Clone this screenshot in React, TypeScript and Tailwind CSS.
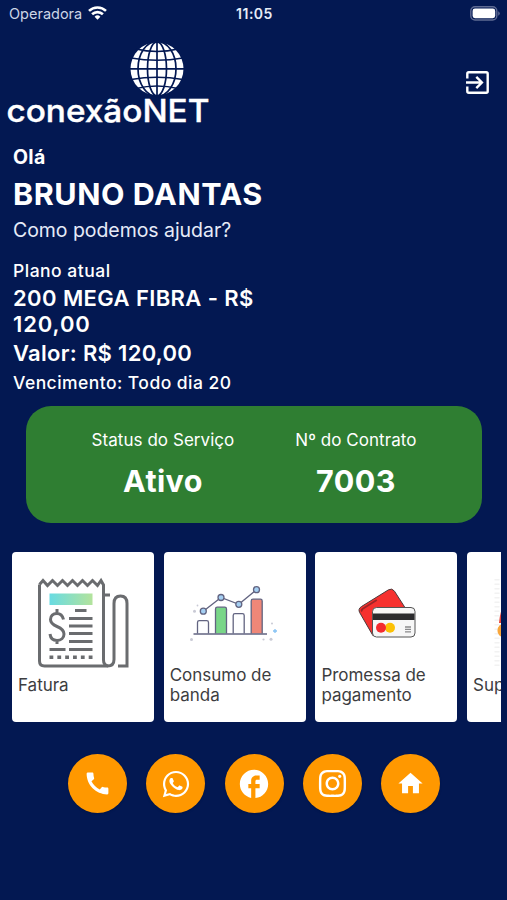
import type { ReactNode } from 'react';
import { MdCall, MdFacebook, MdHome } from 'react-icons/md';
import { FaInstagram, FaWhatsapp } from 'react-icons/fa';

function StatusBar() {
  return (
    <div className="grid h-7 shrink-0 grid-cols-3 items-center pl-[9px] pr-[7px]">
      <div className="flex items-center gap-[6px] text-[14.5px] leading-5 text-[#cdd5e6]">
        <span>Operadora</span>
        <svg className="h-[14px] w-[19px] -translate-y-px" viewBox="0 0 19 14" fill="none" stroke="#fff" strokeWidth="2.6">
          <path d="M1 4.9a12.2 12.2 0 0 1 17 0" />
          <path d="M4.1 8.3a7.8 7.8 0 0 1 10.8 0" />
          <path d="M9.5 13.7 6.6 10.8a4.1 4.1 0 0 1 5.8 0Z" fill="#fff" stroke="none" />
        </svg>
      </div>
      <span className="-translate-y-px text-center text-[14px] font-semibold tracking-[0.5px] text-[#e6ecf7]">11:05</span>
      <svg className="h-[15px] w-[30px] -translate-y-px justify-self-end" viewBox="0 0 30 15">
        <rect x="0.8" y="0.8" width="26" height="13.2" rx="4.2" fill="none" stroke="#5f6b93" strokeWidth="1.4" />
        <rect x="2.6" y="2.6" width="22.6" height="9.6" rx="2.4" fill="#fff" />
        <path d="M28.2 5.2q1.6.8 1.6 2.3t-1.6 2.3Z" fill="#5f6b93" />
      </svg>
    </div>
  );
}

function Logo() {
  return (
    <svg className="h-[88px] w-[206px]" viewBox="0 0 206 88" role="img" aria-label="conexãoNET">
      <circle cx="151" cy="28.8" r="26.5" fill="#fff" />
      <g fill="none" stroke="#031852" strokeWidth="1.7">
        <path d="M151 2v54M124 28.800h54" />
        <ellipse cx="151" cy="28.800" rx="9.500" ry="27" />
        <ellipse cx="151" cy="28.800" rx="19" ry="27.500" />
        <path d="M125 18q26 4.500 52 0M130 9q21 5 42 0M125 39.500q26-4.500 52 0M130 48.500q21-5 42 0" />
      </g>
      <text
        x="0.5"
        y="81.5"
        fill="#fff"
        stroke="#fff"
        strokeWidth="0.4"
        fontSize="31.5"
        fontWeight="500"
        textLength="203"
        lengthAdjust="spacingAndGlyphs"
      >
        conexãoNET
      </text>
    </svg>
  );
}

function ExitIcon() {
  return (
    <svg className="h-[23px] w-[23px]" viewBox="0 0 23 23" fill="none" stroke="#fff" strokeWidth="2.4">
      <path d="M1.3 7.5V2.8q0-1.5 1.5-1.5h17.4q1.5 0 1.5 1.5v17.4q0 1.5-1.5 1.5H2.8q-1.5 0-1.5-1.5v-4.7" />
      <path d="M0 11.5h15.500M10.300 5.900l5.600 5.600-5.600 5.600" />
    </svg>
  );
}

function InvoiceIcon() {
  return (
    <svg className="h-[92px] w-[92px] translate-y-[9px]" viewBox="0 0 92 92" fill="none" stroke="#6a6c6f" strokeWidth="3">
      <defs>
        <linearGradient id="band" x1="0" x2="1" y1="0" y2="0">
          <stop offset="0" stopColor="#68dbe2" />
          <stop offset="1" stopColor="#b3e39c" />
        </linearGradient>
      </defs>
      <path d="M2.500 7.500V84q0 5 5 5h63q6.500 0 6.500-6.500V26.500q0-7.500 6.500-7.500t6.500 7.500V89H81" />
      <path d="M2.500 7.500 6 3.500l4.500 5 5-5 5 5 5-5 5 5 5-5 5 5 5-5 5 5 5-5 5 5 3.500-5 2.500 4.500V83q0 5 4.500 6M67 18h6" />
      <rect x="12.500" y="16.500" width="43" height="11.500" fill="url(#band)" stroke="none" />
      <path d="M26.500 42.500c-1-4-3-6-6.500-6-4 0-6.500 2.300-6.500 6 0 4 3 5.500 6.500 7s7 3.500 7 7.500-3 6.500-7 6.500-6.500-2.500-7-6.500M20 32v5M20 62.500v4.500" />
      <path d="M38 33.500H49.500M32 41.500H55.500M32 49H55.500M32 56.500H55.500M32 64.500H55.500M32 72.500H55.500M12.500 72.500H28.500" />
      <path d="M12.500 80.300h43" strokeWidth="3.400" strokeDasharray="3.800 4.040" />
    </svg>
  );
}

function UsageIcon() {
  return (
    <svg className="h-[60px] w-[90px] -translate-y-[2px]" viewBox="0 0 90 60" fill="none" stroke="#626481" strokeWidth="1.300">
      <path d="M7.500 51.500V40.500q0-1.800 1.800-1.800h7.400q1.800 0 1.800 1.800v11" fill="#fdfeff" />
      <path d="M25.500 51.500V27q0-1.800 1.800-1.800h7.400q1.800 0 1.800 1.800v24.500" fill="#79d688" />
      <path d="M43.200 51.500V33.500q0-1.800 1.800-1.800h7.400q1.800 0 1.800 1.800v18" fill="#fdfeff" />
      <path d="M61.200 51.500V19q0-1.800 1.800-1.800h7.400q1.800 0 1.800 1.800v32.500" fill="#ef8778" />
      <path d="M3.500 52h73.500M13.300 29.200 31 15.500l17.800 6.800L66.500 7.700" />
      <g fill="#a5cff2">
        <circle cx="13.300" cy="29.200" r="3" />
        <circle cx="31" cy="15.500" r="3" />
        <circle cx="48.800" cy="22.300" r="3" />
        <circle cx="66.500" cy="7.700" r="3" />
      </g>
      <g fill="#c9cad5" stroke="none">
        <circle cx="7.500" cy="23.500" r=".9" />
        <circle cx="4.500" cy="29.200" r="1.500" />
        <circle cx="1.500" cy="57.500" r="1.500" />
        <circle cx="73.500" cy="57.500" r="1.100" />
        <circle cx="81" cy="57.300" r="1.500" />
        <circle cx="82" cy="41.500" r="1" />
      </g>
      <path d="M85 47v4M83 49h4" stroke="#85c2f4" />
    </svg>
  );
}

function CardsIcon() {
  return (
    <svg className="h-[50px] w-[58px] translate-x-px -translate-y-px" viewBox="0 0 58 50" fill="none" stroke="#4b3b3c" strokeWidth="1">
      <path d="M3.500 18.500 30.500 1.800q3.500-2 6 1.400l16 25-30 15.500-7.500 4L1.800 24.800q-2.200-3.800 1.700-6.300Z" fill="#f6312f" />
      <path d="M4 23.500q-1-1.500.8-2.700l14-8.800" stroke="#9e2527" strokeWidth="1.800" />
      <rect x="14.500" y="19.500" width="42.500" height="29.500" rx="4" fill="#f7f7f7" stroke="#555" />
      <path d="M15 28.800h41.500" stroke="#2c2c2e" strokeWidth="6.600" />
      <circle cx="32" cy="39.700" r="5" fill="#fcc105" stroke="none" />
      <circle cx="23" cy="39.700" r="5" fill="#f42c30" stroke="none" />
      <path d="M47 39h6M47 41.400h6M47 43.800h6" stroke="#8a8a8c" strokeWidth="1.300" />
    </svg>
  );
}

// Only the left edge is visible, the carousel cuts the rest off
function SupportIcon() {
  return (
    <svg className="h-[92px] w-[92px] translate-y-[9px]" viewBox="0 0 92 92">
      <path d="M5 2v88" stroke="#f2f2f2" strokeWidth="5" strokeDasharray="1.500 3" />
      <path d="M46 8C22 8 9 22 7 46H22l4-18h40l4 18h15C83 22 70 8 46 8Z" fill="#e74438" />
      <rect x="5.5" y="47" width="16" height="13" rx="6" fill="#f9a63a" />
      <circle cx="46" cy="50" r="24" fill="#f9c392" />
    </svg>
  );
}

const services: { label: string; icon: ReactNode }[] = [
  { label: 'Fatura', icon: <InvoiceIcon /> },
  { label: 'Consumo de banda', icon: <UsageIcon /> },
  { label: 'Promessa de pagamento', icon: <CardsIcon /> },
  { label: 'Suporte', icon: <SupportIcon /> },
];

function ServiceCard({ label, icon }: { label: string; icon: ReactNode }) {
  return (
    <button className="flex h-[170px] w-[142px] shrink-0 flex-col rounded bg-white px-[6px] text-left">
      <span className="mt-[14px] flex h-[96px] w-full items-center justify-center">{icon}</span>
      <span className="flex h-[46px] items-center text-[17px] leading-[20.5px] tracking-[-0.02px] text-[#3d3d3f]">
        {label}
      </span>
    </button>
  );
}

const contacts: { name: string; icon: ReactNode }[] = [
  { name: 'Telefone', icon: <MdCall className="h-[29px] w-[29px]" /> },
  { name: 'WhatsApp', icon: <FaWhatsapp className="h-[30px] w-[30px]" /> },
  { name: 'Facebook', icon: <MdFacebook className="h-[34px] w-[34px]" /> },
  { name: 'Instagram', icon: <FaInstagram className="h-[31px] w-[31px]" /> },
  { name: 'Início', icon: <MdHome className="h-[29px] w-[29px]" /> },
];

function Stat({ label, value }: { label: string; value: string }) {
  return (
    <div className="flex flex-col items-center">
      <span className="text-[17px] leading-6 tracking-[0.05px]">{label}</span>
      <span className="mt-[9px] text-[30.5px] font-bold leading-10 tracking-[0.4px]">{value}</span>
    </div>
  );
}

export default function App() {
  return (
    <div
      className="flex h-[900px] w-[507px] flex-col overflow-hidden bg-[#031852] text-white"
      style={{ fontFamily: 'Inter, "Liberation Sans", sans-serif' }}
    >
      <StatusBar />

      <header className="flex h-[117px] shrink-0 items-start justify-between pl-[6px] pr-[18px] pt-3">
        <Logo />
        <button className="mt-[31px]" aria-label="Sair">
          <ExitIcon />
        </button>
      </header>

      <section className="pl-[13px]">
        <p className="text-[19.5px] font-bold leading-[25px] tracking-[0.3px]">Olá</p>
        <h1 className="mt-[5px] text-[30.5px] font-bold leading-[38px] tracking-[0.55px]">BRUNO DANTAS</h1>
        <p className="mt-[5px] text-[19.5px] leading-6 tracking-[-0.05px] text-[#e6ebf8]">Como podemos ajudar?</p>
        <p className="mt-[18px] text-[17.5px] font-medium leading-[21px] tracking-[0.5px]">Plano atual</p>
        <p className="mt-1 w-[260px] text-[22px] font-semibold leading-[26px] tracking-[0.4px]">
          200 MEGA FIBRA - R$ <span className="tracking-[0.9px]">120,00</span>
        </p>
        <p className="mt-[3px] text-[22px] font-semibold leading-[26px] tracking-[0.3px]">Valor: R$ 120,00</p>
        <p className="mt-[6px] text-[17.5px] font-medium leading-[21px] tracking-[0.45px]">Vencimento: Todo dia 20</p>
      </section>

      <section className="ml-[26px] mt-[13px] flex h-[117px] w-[456px] shrink-0 justify-center gap-[61px] rounded-[25px] bg-[#2f7e32] pt-[22px]">
        <Stat label="Status do Serviço" value="Ativo" />
        <Stat label="Nº do Contrato" value="7003" />
      </section>

      <section className="ml-3 mr-[6px] mt-[29px] flex shrink-0 gap-[9.7px] overflow-hidden">
        {services.map((service) => (
          <ServiceCard key={service.label} label={service.label} icon={service.icon} />
        ))}
      </section>

      <nav className="mt-8 flex justify-center gap-[19.2px] pl-px">
        {contacts.map((contact) => (
          <button
            key={contact.name}
            aria-label={contact.name}
            className="flex h-[59px] w-[59px] items-center justify-center rounded-full bg-[#ff9800] shadow-sm"
          >
            {contact.icon}
          </button>
        ))}
      </nav>
    </div>
  );
}
